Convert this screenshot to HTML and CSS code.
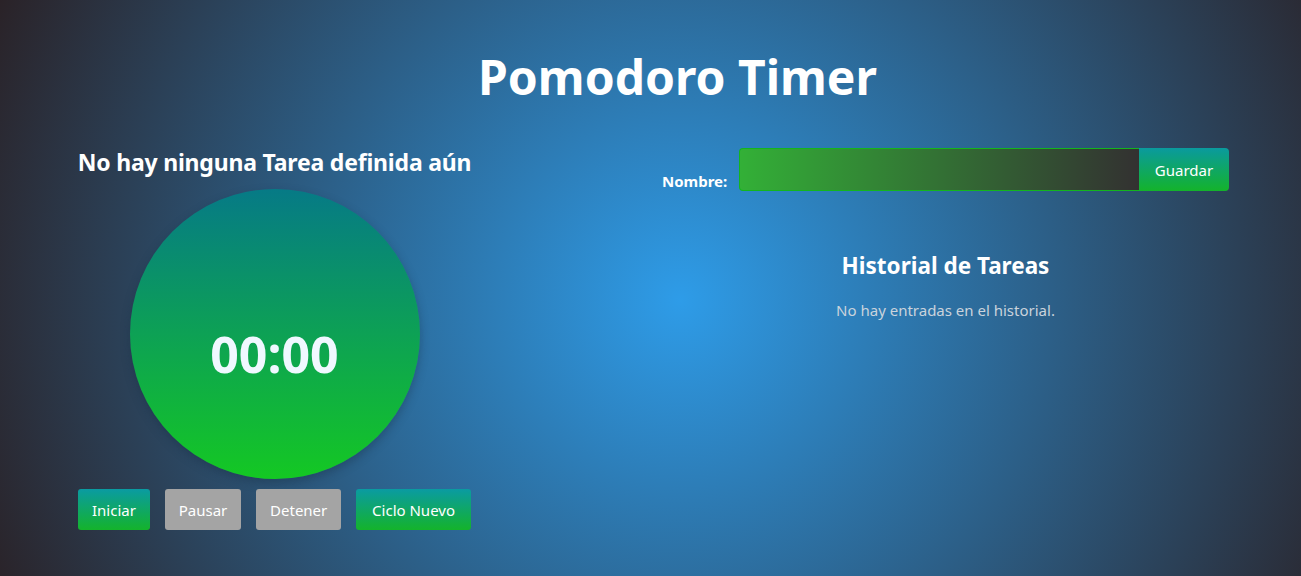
FILE: index.html
```html
<!DOCTYPE html>
<html lang="es">
<head>
<meta charset="utf-8">
<title>Pomodoro Timer</title>
<link rel="stylesheet" href="styles.css">
</head>
<body>
<main class="page">
  <h1 class="title">Pomodoro Timer</h1>
  <div class="layout">
    <section class="timer-col">
      <h2 class="task-title">No hay ninguna Tarea definida aún</h2>
      <div class="clock"><span class="clock-text">00:00</span></div>
      <div class="controls">
        <button class="btn btn-green">Iniciar</button>
        <button class="btn btn-gray">Pausar</button>
        <button class="btn btn-gray">Detener</button>
        <button class="btn btn-green btn-wide">Ciclo Nuevo</button>
      </div>
    </section>
    <section class="task-col">
      <form class="task-form">
        <label class="task-label" for="nombre">Nombre:</label>
        <div class="field">
          <input class="task-input" id="nombre" type="text">
          <button class="save-btn" type="button">Guardar</button>
        </div>
      </form>
      <h2 class="history-title">Historial de Tareas</h2>
      <p class="history-empty">No hay entradas en el historial.</p>
    </section>
  </div>
</main>
</body>
</html>
```

FILE: styles.css
```css
html, body {
  margin: 0;
  height: 100%;
}
body {
  font-family: "Noto Sans", "Open Sans", sans-serif;
  color: #fff;
  background: radial-gradient(circle 745px at 680px 300px, #2e9ce8 0%, #2a2227 100%);
  overflow: hidden;
}
.page {
  padding-top: 46px;
}
.title {
  margin: 0;
  padding-left: 54px;
  text-align: center;
  font-size: 48px;
  line-height: 62px;
  font-weight: 700;
}
.layout {
  display: flex;
  margin-top: 36px;
  padding-left: 78px;
}
.timer-col {
  width: 393px;
  display: flex;
  flex-direction: column;
  align-items: center;
}
.task-title {
  margin: 2px 0 0;
  font-size: 23px;
  line-height: 32px;
  font-weight: 700;
  white-space: nowrap;
  letter-spacing: -0.2px;
}
.clock {
  width: 290px;
  height: 290px;
  margin-top: 11px;
  border-radius: 50%;
  background: linear-gradient(#067a86, #14c823);
  box-shadow: 0 4px 10px rgba(20, 40, 60, 0.35);
  display: flex;
  align-items: center;
  justify-content: center;
}
.clock-text {
  font-size: 50px;
  font-weight: 700;
  color: #f0f8ff;
  margin-top: 40px;
}
.controls {
  display: flex;
  justify-content: space-between;
  margin-top: 10px;
  align-self: stretch;
}
.btn {
  flex-shrink: 0;
  white-space: nowrap;
  height: 41px;
  padding: 0 14px;
  border: none;
  border-radius: 3px;
  font-family: inherit;
  font-size: 15px;
  color: #fff;
}
.btn-wide {
  padding: 0 16px;
}
.btn-green {
  background: linear-gradient(#0a9ba2, #14b32b);
}
.btn-gray {
  background: #a4a4a4;
}
.task-col {
  margin-left: 191px;
  width: 567px;
  display: flex;
  flex-direction: column;
  align-items: center;
}
.task-form {
  align-self: stretch;
  display: flex;
  align-items: flex-end;
  gap: 12px;
  margin-top: 4px;
}
.task-label {
  font-size: 15px;
  font-weight: 700;
  line-height: 18px;
  margin-bottom: 1px;
}
.field {
  flex: 1;
  display: flex;
  height: 43px;
}
.task-input {
  flex: 1;
  margin: 0;
  border: 1px solid #13b51e;
  border-right: none;
  border-radius: 4px 0 0 4px;
  background: linear-gradient(90deg, #33b037, #333131);
  font-family: inherit;
  font-size: 15px;
  color: #fff;
  outline: none;
  padding: 0 10px;
}
.save-btn {
  width: 90px;
  border: none;
  border-radius: 0 4px 4px 0;
  background: linear-gradient(#0a9a9e, #14b32b);
  color: #fff;
  font-family: inherit;
  font-size: 15px;
}
.history-title {
  margin: 60px 0 0;
  font-size: 22.5px;
  line-height: 30px;
  font-weight: 700;
}
.history-empty {
  margin: 19px 0 0;
  font-size: 15px;
  color: #cad3dc;
}
```
